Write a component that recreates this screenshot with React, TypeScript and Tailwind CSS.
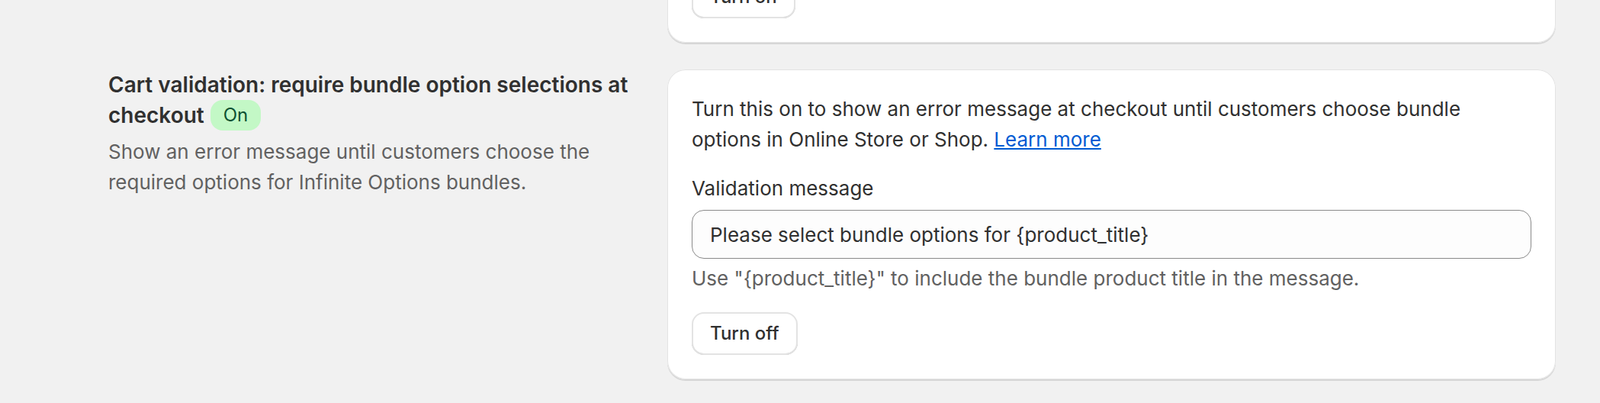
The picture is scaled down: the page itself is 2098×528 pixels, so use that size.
import React from 'react'

function Card({ children }: { children: React.ReactNode }) {
  return (
    <div className="rounded-3xl bg-white p-8 shadow-[inset_0_0_0_1px_#e3e3e3,0_2px_0_0_#d6d6d6]">
      {children}
    </div>
  )
}

function SecondaryButton({ label }: { label: string }) {
  return (
    <button className="h-14 rounded-2xl bg-white px-6 text-[24px] font-medium leading-10 text-[#303030] shadow-[inset_0_0_0_2px_#e3e3e3,inset_0_-2px_0_0_#b5b5b5]">
      {label}
    </button>
  )
}

export default function App() {
  return (
    <div className="min-h-screen overflow-hidden bg-[#f1f1f1] font-[Inter,sans-serif] text-[26px] leading-10 text-[#303030]">
      <div className="-mt-[64px] flex flex-col gap-[35px] pl-[142px]">
        {/* previous setting, scrolled mostly out of view */}
        <div className="grid grid-cols-[701px_1165px] gap-8">
          <div />
          <Card>
            <SecondaryButton label="Turn on" />
          </Card>
        </div>

        <div className="grid grid-cols-[701px_1165px] gap-8">
          <div>
            <h2 className="text-[28px] font-semibold text-[#303030]">
              Cart validation: require bundle option selections at checkout
              <span className="ml-2 inline-block h-10 rounded-2xl bg-[#c3f8c6] px-[17px] align-top text-[24px] font-normal leading-10 text-[#0c5132]">
                On
              </span>
            </h2>
            <p className="mt-2 text-[#616161]">
              Show an error message until customers choose the required options for Infinite Options bundles.
            </p>
          </div>

          <Card>
            <div className="flex flex-col gap-6">
              <p>
                Turn this on to show an error message at checkout until customers choose bundle options in Online
                Store or Shop.{' '}
                <a href="#" className="text-[#005bd3] underline">
                  Learn more
                </a>
              </p>

              <div>
                <label className="block">Validation message</label>
                <input
                  readOnly
                  value="Please select bundle options for {product_title}"
                  className="mt-2 h-16 w-full rounded-2xl border border-[#8a8a8a] bg-[#fdfdfd] px-[23px] text-[26px] text-[#303030] outline-none"
                />
                <p className="mt-1.5 text-[#616161]">
                  Use "{'{product_title}'}" to include the bundle product title in the message.
                </p>
              </div>

              <div>
                <SecondaryButton label="Turn off" />
              </div>
            </div>
          </Card>
        </div>
      </div>
    </div>
  )
}
